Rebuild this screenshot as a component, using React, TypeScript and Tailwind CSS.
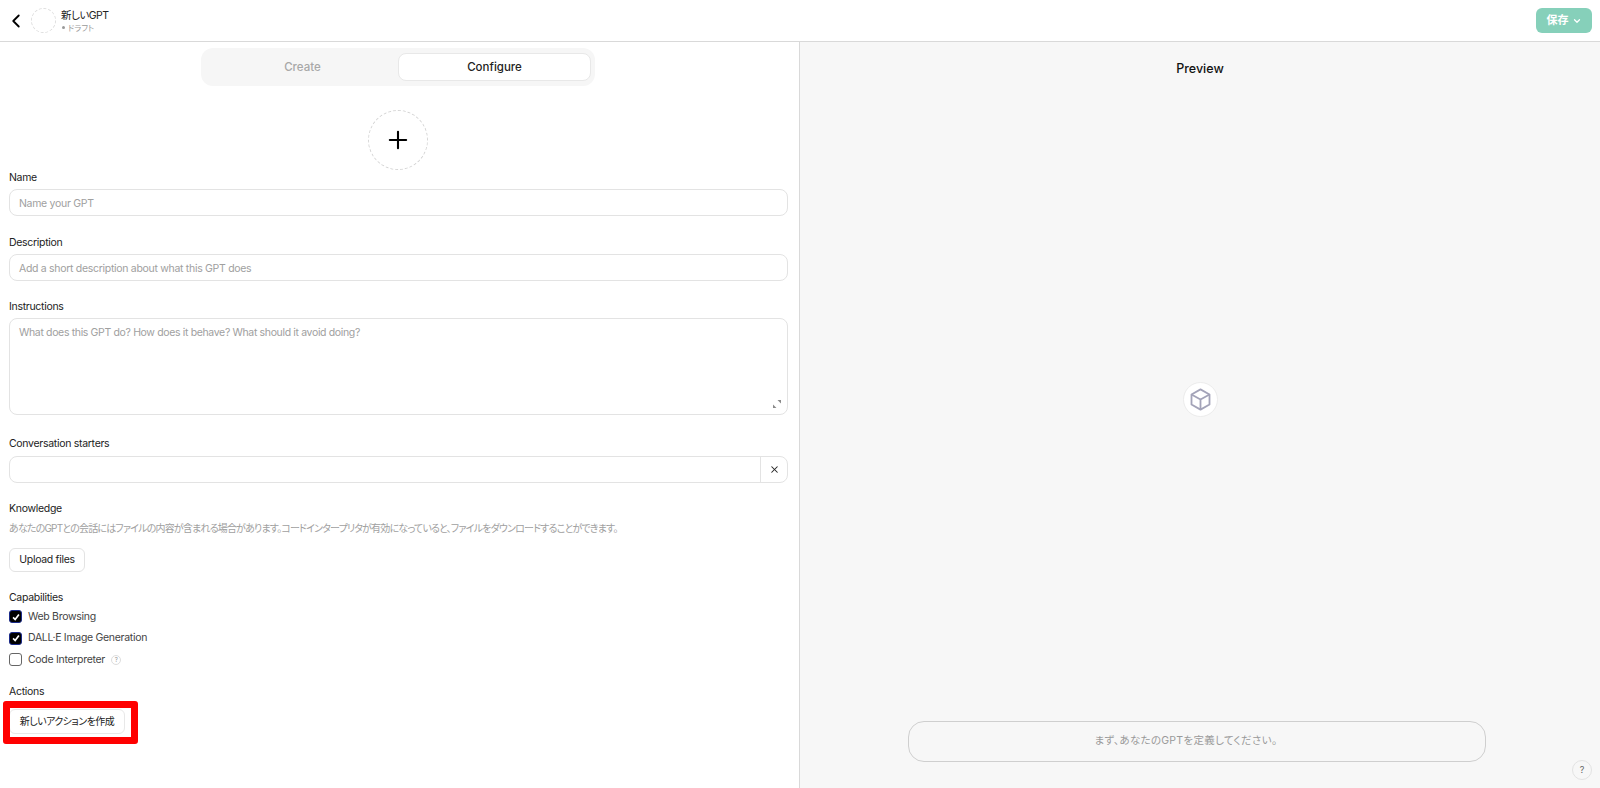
import { ChevronDown, ChevronLeft, Plus, X } from 'lucide-react';

const font = "font-['Inter','Noto_Sans_CJK_JP',sans-serif]";
const body = 'text-[10.5px] tracking-[-0.3px]';
const jp = "[font-feature-settings:'palt']";

function Label({ children }: { children: React.ReactNode }) {
  return <div className={`${body} leading-4 text-[#222]`}>{children}</div>;
}

function Field({ label, placeholder, className }: { label: string; placeholder: string; className: string }) {
  return (
    <div className={className}>
      <Label>{label}</Label>
      <div className={`mt-[3px] flex h-[27px] items-center rounded-lg border border-[#e3e3e3] px-[9px] pt-[2px] ${body} text-[#a0a0a0]`}>
        {placeholder}
      </div>
    </div>
  );
}

function Check({ label, checked, hint }: { label: string; checked?: boolean; hint?: boolean }) {
  return (
    <div className={`flex h-[21.5px] items-center gap-[6px] ${body} text-[#444]`}>
      {checked ? (
        <span className="flex h-[13px] w-[13px] items-center justify-center rounded-[3px] border border-[#1a2a8a] bg-black">
          <svg viewBox="0 0 12 12" className="h-[10px] w-[10px]" fill="none" stroke="white" strokeWidth="2">
            <path d="M2.5 6.5 5 9l4.5-6" />
          </svg>
        </span>
      ) : (
        <span className="h-[13px] w-[13px] rounded-[3px] border border-[#666] bg-white" />
      )}
      <span>{label}</span>
      {hint && (
        <span className="flex h-[10px] w-[10px] items-center justify-center rounded-full border border-[#ddd] text-[6px] text-[#999]">
          ?
        </span>
      )}
    </div>
  );
}

export default function App() {
  return (
    <div className={`flex h-[788px] w-[1600px] flex-col overflow-hidden bg-white ${font}`}>
      <header className="flex h-[42px] shrink-0 items-center justify-between border-b border-[#d9d9d9] pl-[5px] pr-[8px]">
        <div className="flex items-center">
          <ChevronLeft className="h-[22px] w-[22px] text-black" strokeWidth={2} />
          <div className="ml-[4px] h-[25px] w-[25px] rounded-full border border-dashed border-[#ddd]" />
          <div className="ml-[5px] flex flex-col">
            <span className={`text-[10.5px] leading-[14px] tracking-[-0.5px] text-[#222] ${jp}`}>新しいGPT</span>
            <span className={`ml-[1px] flex items-center gap-[3px] text-[8px] leading-[10px] text-[#9a9a9a] ${jp}`}>
              <span className="h-[3px] w-[3px] rounded-full bg-[#999]" />
              ドラフト
            </span>
          </div>
        </div>
        <button className="flex h-[25px] w-[56px] items-center justify-center gap-[3px] rounded-md bg-[#86d0ba] text-[11px] font-semibold text-white">
          保存
          <ChevronDown className="h-[10px] w-[10px]" strokeWidth={3} />
        </button>
      </header>

      <div className="flex min-h-0 flex-1">
        <main className="relative w-[800px] shrink-0 border-r border-[#d9d9d9] pl-[9px] pr-[11px]">
          <div className="ml-[192px] mt-[6px] flex h-[38px] w-[394px] rounded-xl bg-[#f6f6f6] py-[5px] pl-[6px] pr-[4px] text-[11.5px] font-medium">
            <div className="flex flex-1 items-center justify-center pt-[1px] text-[#a8a8a8]">Create</div>
            <div className="flex w-[193px] items-center justify-center rounded-lg border border-[#e8e8e8] bg-white pt-[1px] text-[#222]">
              Configure
            </div>
          </div>

          <div className="ml-[359px] mt-[24px] flex h-[60px] w-[60px] items-center justify-center rounded-full border border-dashed border-[#d5d5d5]">
            <Plus className="h-[28px] w-[28px] text-black" strokeWidth={1.8} />
          </div>

          <Field className="mt-[0px]" label="Name" placeholder="Name your GPT" />
          <Field className="mt-[19px]" label="Description" placeholder="Add a short description about what this GPT does" />

          <div className="mt-[18px]">
            <Label>Instructions</Label>
            <div className="relative mt-[3px] h-[97px] rounded-lg border border-[#e3e3e3] px-[9px] py-[6px] text-[10.5px] tracking-[-0.35px] text-[#a0a0a0]">
              What does this GPT do? How does it behave? What should it avoid doing?
              <svg viewBox="0 0 10 10" className="absolute bottom-[5px] right-[5px] h-[10px] w-[10px]" fill="#8a8a8a">
                <path d="M5.5 1H9v3.5zM1 5.5 4.5 9H1z" />
              </svg>
            </div>
          </div>

          <div className="mt-[21px]">
            <Label>Conversation starters</Label>
            <div className="mt-[4px] flex h-[27px] rounded-lg border border-[#e3e3e3]">
              <div className="flex-1" />
              <div className="flex w-[27px] items-center justify-center border-l border-[#e3e3e3]">
                <X className="h-[11px] w-[11px] text-[#222]" strokeWidth={2.2} />
              </div>
            </div>
          </div>

          <div className="mt-[18px]">
            <Label>Knowledge</Label>
            <div className={`mt-[3px] text-[10px] leading-4 tracking-[-0.82px] text-[#a0a0a0] ${jp}`}>
              あなたのGPTとの会話にはファイルの内容が含まれる場合があります。コードインタープリタが有効になっていると、ファイルをダウンロードすることができます。
            </div>
            <button className={`mt-[12px] flex h-[24px] w-[76px] items-center justify-center rounded-md border border-[#e3e3e3] ${body} text-[#222]`}>
              Upload files
            </button>
          </div>

          <div className="mt-[18px]">
            <Label>Capabilities</Label>
            <div>
              <Check label="Web Browsing" checked />
              <Check label="DALL·E Image Generation" checked />
              <Check label="Code Interpreter" hint />
            </div>
          </div>

          <div className="mt-[13px]">
            <Label>Actions</Label>
            {/* red annotation drawn over the screenshot */}
            <div className={`relative mt-[9px] flex h-[25px] w-[116px] items-center justify-center rounded-md border border-[#e8e8e8] pt-[1px] whitespace-nowrap text-[10px] tracking-[-0.55px] text-[#222] ${jp}`}>
              新しいアクションを作成
              <div className="absolute -top-[9px] -left-[7px] h-[43px] w-[135px] rounded-[3px] border-[7px] border-[#ff0000]" />
            </div>
          </div>
        </main>

        <aside className="relative flex flex-1 flex-col items-center bg-[#f7f7f7]">
          <div className="mt-[18px] text-[12.5px] font-medium text-[#111]">Preview</div>
          <div className="mt-[303px] flex h-[35px] w-[35px] items-center justify-center rounded-full border border-[#ececec] bg-white">
            <svg viewBox="0 0 24 24" className="h-[27px] w-[27px] shrink-0" fill="none" stroke="#a3a3b8" strokeWidth="1.6" strokeLinejoin="round">
              <path d="M12 3l8 4.5v9L12 21l-8-4.5v-9z" />
              <path d="M4 7.5l8 4.5 8-4.5M12 12v9" />
            </svg>
          </div>
          <div className={`mr-[6px] mt-[304px] flex h-[41px] w-[578px] items-center justify-center rounded-2xl border border-[#cfcfcf] pr-[22px] text-[10.5px] tracking-[0.3px] text-[#9a9a9a] ${jp}`}>
            まず、あなたのGPTを定義してください。
          </div>
          <div className="absolute bottom-[8px] right-[8px] flex h-[20px] w-[20px] items-center justify-center rounded-full border border-[#e3e3e3] text-[9px] text-[#666]">
            ?
          </div>
        </aside>
      </div>
    </div>
  );
}
